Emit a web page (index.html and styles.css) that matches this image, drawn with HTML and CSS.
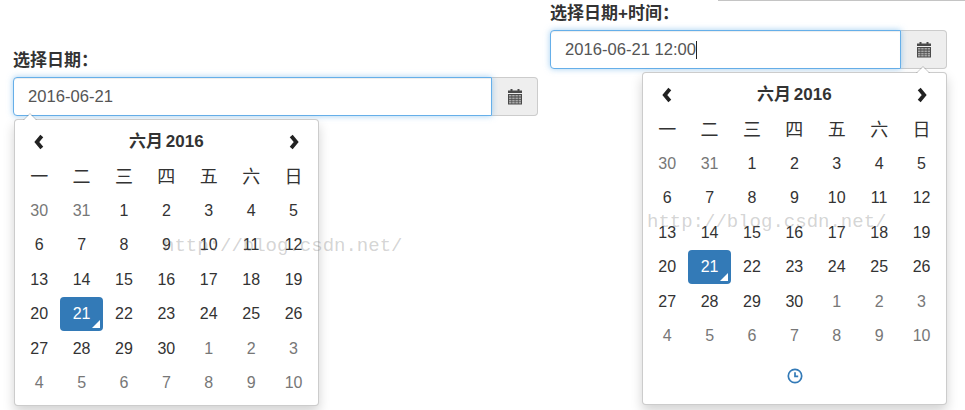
FILE: index.html
```html
<!DOCTYPE html>
<html lang="zh">
<head>
<meta charset="utf-8">
<title>日期选择</title>
<link rel="stylesheet" href="styles.css">
</head>
<body>
<div class="stage">
  <div class="topline"></div>
  <section class="picker picker-left">
    <label class="label">选择日期：</label>
    <div class="group">
      <div class="input">2016-06-21</div>
      <div class="addon"><svg class="cal" viewBox="0 0 16 16"><path d="M3.500 0h2v2h-2zM10.500 0h2v2h-2zM1 1.500h14V4H1zM1 5h14v10.500H1z"/><path class="cal-cells" d="M2 6h2.500v1.600H2zM5.200 6h2.500v1.600H5.200zM8.400 6h2.500v1.600H8.400zM11.600 6H14v1.600h-2.400zM2 8.400h2.500V10H2zM5.200 8.400h2.500V10H5.200zM8.400 8.400h2.500V10H8.400zM11.600 8.400H14V10h-2.400zM2 10.800h2.500v1.600H2zM5.200 10.800h2.500v1.600H5.200zM8.400 10.800h2.500v1.600H8.400zM11.600 10.800H14v1.600h-2.400zM2 13.100h2.500v1.500H2zM5.200 13.100h2.500v1.500H5.200zM8.400 13.100h2.500v1.500H8.400zM11.600 13.100H14v1.500h-2.400z"/></svg></div>
    </div>
    <div class="menu menu-left">
      <div class="grid">
        <div class="nav"><svg class="chev" viewBox="0 0 10 16"><path d="M7.800 2 2.800 8l5 6"/></svg></div>
        <div class="title">六月 2016</div>
        <div class="nav"><svg class="chev" viewBox="0 0 10 16"><path d="M2.200 2l5 6-5 6"/></svg></div>
        <div class="dow">一</div><div class="dow">二</div><div class="dow">三</div><div class="dow">四</div><div class="dow">五</div><div class="dow">六</div><div class="dow">日</div>
        <div class="old">30</div><div class="old">31</div><div>1</div><div>2</div><div>3</div><div>4</div><div>5</div>
        <div>6</div><div>7</div><div>8</div><div>9</div><div>10</div><div>11</div><div>12</div>
        <div>13</div><div>14</div><div>15</div><div>16</div><div>17</div><div>18</div><div>19</div>
        <div>20</div><div class="active">21</div><div>22</div><div>23</div><div>24</div><div>25</div><div>26</div>
        <div>27</div><div>28</div><div>29</div><div>30</div><div class="old">1</div><div class="old">2</div><div class="old">3</div>
        <div class="old">4</div><div class="old">5</div><div class="old">6</div><div class="old">7</div><div class="old">8</div><div class="old">9</div><div class="old">10</div>
      </div>
    </div>
    <div class="mark mark-left">http://blog.csdn.net/</div>
  </section>
  <section class="picker picker-right">
    <label class="label">选择日期+时间：</label>
    <div class="group">
      <div class="input"><span class="caret">2016-06-21 12:00</span></div>
      <div class="addon"><svg class="cal" viewBox="0 0 16 16"><path d="M3.500 0h2v2h-2zM10.500 0h2v2h-2zM1 1.500h14V4H1zM1 5h14v10.500H1z"/><path class="cal-cells" d="M2 6h2.500v1.600H2zM5.200 6h2.500v1.600H5.200zM8.400 6h2.500v1.600H8.400zM11.600 6H14v1.600h-2.400zM2 8.400h2.500V10H2zM5.200 8.400h2.500V10H5.200zM8.400 8.400h2.500V10H8.400zM11.600 8.400H14V10h-2.400zM2 10.800h2.500v1.600H2zM5.200 10.800h2.500v1.600H5.200zM8.400 10.800h2.500v1.600H8.400zM11.600 10.800H14v1.600h-2.400zM2 13.100h2.500v1.500H2zM5.200 13.100h2.500v1.500H5.200zM8.400 13.100h2.500v1.500H8.400zM11.600 13.100H14v1.500h-2.400z"/></svg></div>
    </div>
    <div class="menu menu-right">
      <div class="grid">
        <div class="nav"><svg class="chev" viewBox="0 0 10 16"><path d="M7.800 2 2.800 8l5 6"/></svg></div>
        <div class="title">六月 2016</div>
        <div class="nav"><svg class="chev" viewBox="0 0 10 16"><path d="M2.200 2l5 6-5 6"/></svg></div>
        <div class="dow">一</div><div class="dow">二</div><div class="dow">三</div><div class="dow">四</div><div class="dow">五</div><div class="dow">六</div><div class="dow">日</div>
        <div class="old">30</div><div class="old">31</div><div>1</div><div>2</div><div>3</div><div>4</div><div>5</div>
        <div>6</div><div>7</div><div>8</div><div>9</div><div>10</div><div>11</div><div>12</div>
        <div>13</div><div>14</div><div>15</div><div>16</div><div>17</div><div>18</div><div>19</div>
        <div>20</div><div class="active">21</div><div>22</div><div>23</div><div>24</div><div>25</div><div>26</div>
        <div>27</div><div>28</div><div>29</div><div>30</div><div class="old">1</div><div class="old">2</div><div class="old">3</div>
        <div class="old">4</div><div class="old">5</div><div class="old">6</div><div class="old">7</div><div class="old">8</div><div class="old">9</div><div class="old">10</div>
      </div>
      <div class="toggle"><svg class="clock" viewBox="0 0 16 16"><circle cx="8" cy="8" r="6.700"/><path d="M8 4.200V8.400h3.200"/></svg></div>
    </div>
    <div class="mark mark-right">http://blog.csdn.net/</div>
  </section>
</div>
</body>
</html>
```
FILE: styles.css
```css
* { box-sizing: border-box; }
html, body { margin: 0; padding: 0; background: #fff; }
body { font-family: "Liberation Sans", "Noto Sans CJK SC", sans-serif; color: #333; }
.stage { position: relative; width: 965px; height: 410px; overflow: hidden; display: flex; align-items: flex-start; gap: 12px; padding: 2px 0 0 13px; }
.topline { position: absolute; left: 718px; right: 0; top: 0; height: 1px; background: #c4c4c4; }
.picker { position: relative; display: flex; flex-direction: column; }
.picker-left { width: 525px; margin-top: 47px; }
.picker-right { width: 397px; }
.label { display: block; height: 22px; line-height: 24px; font-size: 17px; font-weight: 700; color: #333; margin-bottom: 6px; white-space: nowrap; }
.group { display: flex; height: 39px; }
.input { flex: 1; border: 1px solid #66afe9; border-radius: 4px 0 0 4px; padding: 0 14px; line-height: 37px; font-size: 16.600px; color: #555; box-shadow: inset 0 1px 1px rgba(0,0,0,.075), 0 0 6px rgba(102,175,233,.6); position: relative; z-index: 1; background: #fff; }
.caret { display: inline-block; line-height: 18px; border-right: 1px solid #222; vertical-align: middle; position: relative; top: -1px; }
.addon { width: 46px; background: #eee; border: 1px solid #ccc; border-left: 0; border-radius: 0 4px 4px 0; display: flex; align-items: center; justify-content: center; }
.cal { width: 16px; height: 16px; fill: #4a4a4a; }
.cal-cells { fill: #a8a8a8; }
.menu { position: relative; z-index: 2; width: 305px; margin-top: 3px; padding: 5px 3px; background: #fff; border: 1px solid rgba(0,0,0,.2); border-radius: 4px; box-shadow: 0 6px 12px rgba(0,0,0,.175); }
.menu-left { margin-left: 1px; }
.menu-right { margin-left: auto; }
.menu::before { content: ""; position: absolute; top: -7px; border-left: 7px solid transparent; border-right: 7px solid transparent; border-bottom: 7px solid rgba(0,0,0,.2); }
.menu::after { content: ""; position: absolute; top: -6px; border-left: 6px solid transparent; border-right: 6px solid transparent; border-bottom: 6px solid #fff; }
.menu-left::before { left: 8px; }
.menu-left::after { left: 9px; }
.menu-right::before { right: 16px; }
.menu-right::after { right: 17px; }
.grid { display: grid; grid-template-columns: repeat(7, 42.4px); grid-auto-rows: 34.4px; font-size: 16px; color: #333; text-align: center; }
.grid > div { display: flex; align-items: center; justify-content: center; }
.chev { width: 10px; height: 16px; fill: none; stroke: #222; stroke-width: 3.800; }
.grid > .title { grid-column: span 5; font-weight: 700; font-size: 17px; color: #333; padding-bottom: 5px; word-spacing: -2px; }
.grid > .dow { font-size: 18px; color: #333; font-family: "Noto Sans CJK SC", sans-serif; font-weight: 400; padding-bottom: 3px; }
.old { color: #777; }
.grid > .active { position: relative; background: #337ab7; color: #fff; border-radius: 4px; }
.active::after { content: ""; position: absolute; right: 3px; bottom: 3px; border-left: 8px solid transparent; border-bottom: 8px solid #fff; }
.toggle { height: 46px; display: flex; align-items: center; justify-content: center; }
.clock { width: 16px; height: 16px; fill: none; stroke: #337ab7; stroke-width: 1.700; }
.mark { position: absolute; z-index: 3; font-family: "Liberation Mono", monospace; font-size: 19px; color: rgba(110,110,110,.3); white-space: nowrap; pointer-events: none; }
.mark-left { left: 150px; top: 186px; }
.mark-right { left: 97px; top: 209px; }
```
